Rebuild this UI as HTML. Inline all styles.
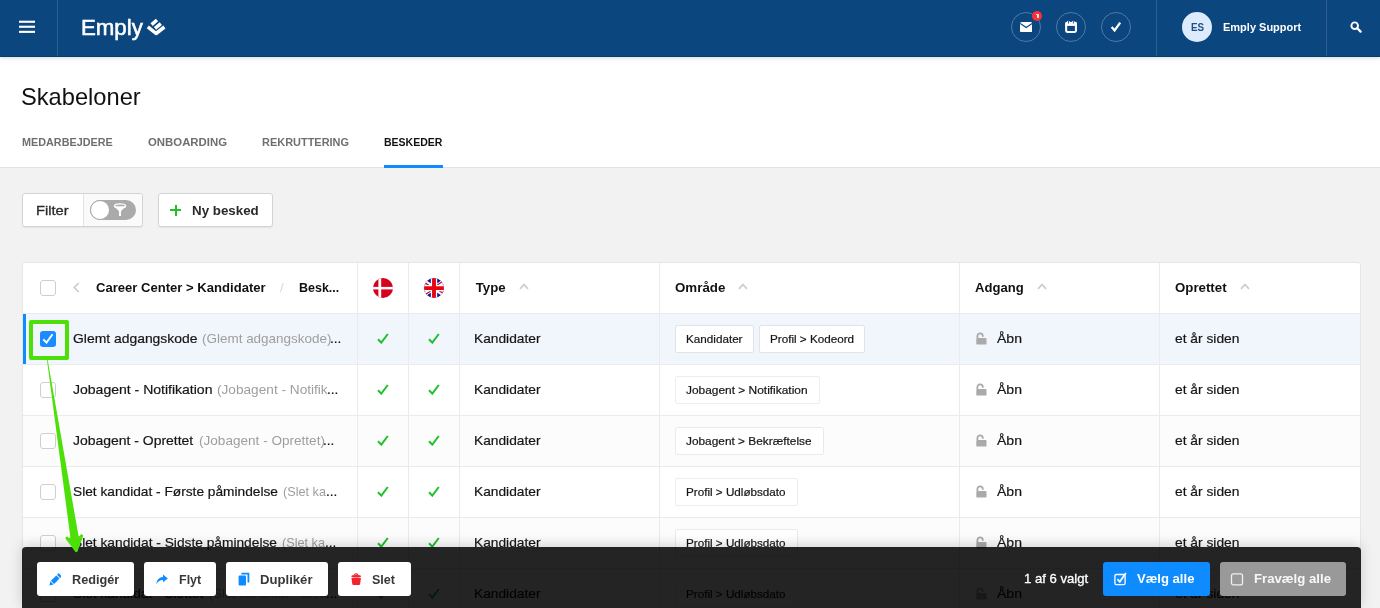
<!DOCTYPE html>
<html lang="da">
<head>
<meta charset="utf-8">
<title>Skabeloner</title>
<style>
*{box-sizing:border-box;margin:0;padding:0}
html,body{width:1380px;height:608px;overflow:hidden;background:#f2f2f2;font-family:"Liberation Sans",sans-serif;color:#111}
.abs,.t{position:absolute}
.t{white-space:nowrap;line-height:1;transform-origin:0 50%}
.b{font-weight:bold}
.w{color:#fff}
#hdr{position:absolute;left:0;top:0;width:1380px;height:57px;background:#0b467f;border-bottom:1px solid #043b78;box-shadow:0 1px 4px rgba(0,0,0,.16);z-index:5}
.vdiv{position:absolute;top:0;width:1px;height:56px;background:rgba(255,255,255,.14)}
.circ{position:absolute;top:12px;width:30px;height:30px;border-radius:50%;border:1px solid rgba(255,255,255,.28)}
#sub{position:absolute;left:0;top:56px;width:1380px;height:112px;background:#fff;border-bottom:1px solid #e2e2e2}
.tab{font-weight:bold;color:#6f6f6f}
.btn{position:absolute;background:#fff;border:1px solid #d4d4d4;border-radius:3px;box-shadow:0 1px 1px rgba(0,0,0,.06)}
#tbl{position:absolute;left:22px;top:262px;width:1339px;height:360px;background:#fff;border:1px solid #e6e6e6;border-radius:3px 3px 0 0}
.row{position:absolute;left:23px;width:1337px;height:51px;border-top:1px solid #ebebeb}
.alt{background:#fcfcfc}
.sel{background:#f1f5fc}
.cdiv{position:absolute;top:263px;width:1px;height:345px;background:#ebebeb}
.cb{position:absolute;left:40px;width:16px;height:16px;border:1px solid #cfcfcf;border-radius:3px;background:#fff}
.c{color:#151515;-webkit-text-stroke:0.2px #151515}
.g{color:#9e9e9e}
.tag{position:absolute;height:26.5px;box-shadow:0 0 0 1px rgba(0,0,0,.07);border-radius:1.5px;background:#fff}
.h{font-weight:bold;color:#111}
#bar{position:absolute;left:22px;top:547px;width:1339px;height:61px;background:rgba(0,0,0,.86);border-radius:4px 4px 0 0;z-index:3;box-shadow:0 -2px 13px rgba(0,0,0,.17)}
.bb{position:absolute;top:562px;height:34px;background:#fff;border-radius:3px;z-index:4}
.z5{z-index:5}
.bt{font-weight:bold;color:#383838;z-index:5}
#root{position:absolute;left:0;top:0;width:1380px;height:608px;overflow:hidden;will-change:transform}
</style>
</head>
<body>
<div id="root">
<div id="hdr">
<svg class="abs" style="left:19px;top:20px" width="16" height="14" viewBox="0 0 16 14"><rect x="0" y="0.7" width="16" height="2.1" fill="#fff"/><rect x="0" y="5.7" width="16" height="2.1" fill="#fff"/><rect x="0" y="10.8" width="16" height="2.1" fill="#fff"/></svg>
<div class="vdiv" style="left:57px"></div>
<span class="t" id="t1" style="left:80.99px;top:17.31px;font-size:22px;transform:scaleX(1.0113);color:#fff;-webkit-text-stroke:0.55px #fff;">Emply</span>
<svg class="abs" style="left:140px;top:10px" width="35" height="35" viewBox="140 10 35 35"><g fill="none" stroke="#fff" stroke-width="3.5" stroke-linejoin="round"><path d="M151.6 24.6 L157.0 20.0"/><path d="M155.0 28.3 L160.8 23.6"/><path d="M147.8 26.9 L156.1 33.5 L164.4 27.0" stroke-linecap="butt"/></g></svg>
<div class="circ" style="left:1011px"></div>
<div class="circ" style="left:1056px"></div>
<div class="circ" style="left:1101px"></div>
<svg class="abs" style="left:1019.8px;top:21.8px" width="12.4" height="10.4" viewBox="0 0 12.4 10.4"><rect x="0" y="0" width="12.4" height="10.4" rx="1.7" fill="#fff"/><path d="M0.3 1.5 L6.2 5.6 L12.1 1.5" fill="none" stroke="#0b467f" stroke-width="1.15"/></svg>
<div class="abs" style="left:1032px;top:11px;width:10px;height:10px;border-radius:50%;background:#fb2f3a"></div>
<div class="abs" style="left:1037.2px;top:13.6px;width:1.5px;height:4.8px;background:#ffd9d9"></div>
<div class="abs" style="left:1036.2px;top:14.1px;width:1.4px;height:1.2px;background:#ffd9d9"></div>
<svg class="abs" style="left:1064px;top:20px" width="14" height="14" viewBox="0 0 14 14"><rect x="2.15" y="2.95" width="9.8" height="9" rx="1.1" fill="none" stroke="#fff" stroke-width="2.1"/><rect x="1.6" y="1.9" width="10.9" height="4" fill="#fff"/><rect x="3.2" y="0.7" width="2.4" height="2.6" rx="0.9" fill="#fff"/><rect x="8.1" y="0.7" width="2.4" height="2.6" rx="0.9" fill="#fff"/><rect x="4" y="0" width="0.85" height="3.5" fill="#0b467f"/><rect x="8.9" y="0" width="0.85" height="3.5" fill="#0b467f"/></svg>
<svg class="abs" style="left:1109px;top:20px" width="14" height="14" viewBox="0 0 14 14"><path d="M2.7 6.9 L5.6 10.4 L11.2 2.6" fill="none" stroke="#fff" stroke-width="2.3"/></svg>
<div class="vdiv" style="left:1156px"></div>
<div class="abs" style="left:1182px;top:12px;width:30px;height:30px;border-radius:50%;background:#dcecfd"></div>
<span class="t b" id="t2" style="left:1190.50px;top:22.32px;font-size:11.3px;transform:scaleX(0.8690);color:#1e4f86;">ES</span>
<span class="t b w" id="t3" style="left:1222.80px;top:22.11px;font-size:11.4px;transform:scaleX(0.9654);">Emply Support</span>
<div class="vdiv" style="left:1326px"></div>
<svg class="abs" style="left:1350px;top:21px" width="13" height="13" viewBox="0 0 13 13"><circle cx="4.7" cy="4.7" r="3.3" fill="none" stroke="#fff" stroke-width="1.9"/><path d="M7.3 7.3 L10.6 10.6" stroke="#fff" stroke-width="2.3" stroke-linecap="round"/></svg>
</div>
<div id="sub"></div>
<span class="t" id="t4" style="left:20.98px;top:86.30px;font-size:23.2px;transform:scaleX(1.0207);color:#111;">Skabeloner</span>
<span class="t tab" id="t5" style="left:22.00px;top:136.01px;font-size:11.6px;transform:scaleX(0.9329);">MEDARBEJDERE</span>
<span class="t tab" id="t6" style="left:148.00px;top:136.01px;font-size:11.6px;transform:scaleX(0.9815);">ONBOARDING</span>
<span class="t tab" id="t7" style="left:262.00px;top:136.01px;font-size:11.6px;transform:scaleX(0.9448);">REKRUTTERING</span>
<span class="t tab" id="t8" style="left:384.00px;top:136.01px;font-size:11.6px;transform:scaleX(0.9070);color:#111;">BESKEDER</span>
<div class="abs" style="left:384px;top:165px;width:59px;height:3px;background:#0d8bff"></div>
<div class="btn" style="left:22px;top:193px;width:121px;height:34px"></div>
<div class="abs" style="left:83px;top:194px;width:59px;height:32px;background:#fafafa;border-left:1px solid #e2e2e2;border-radius:0 3px 3px 0"></div>
<div class="abs" style="left:90px;top:200px;width:46px;height:20px;border-radius:10px;background:#aaa"></div>
<div class="abs" style="left:90px;top:200px;width:20px;height:20px;border-radius:50%;background:#fff;border:0.7px solid #a6a6a6"></div>
<svg class="abs" style="left:113px;top:203.3px" width="14" height="14" viewBox="0 0 14 14"><ellipse cx="7" cy="2.9" rx="5.6" ry="2" fill="none" stroke="#fff" stroke-width="1.3"/><path d="M1.4 3.3 L6 8.2 V13 H8 V8.2 L12.6 3.3 Z" fill="#fff"/></svg>
<span class="t" id="t9" style="left:35.92px;top:204.01px;font-size:13.5px;transform:scaleX(1.0846);color:#2a2a2a;-webkit-text-stroke:0.3px #2a2a2a;">Filter</span>
<div class="btn" style="left:158px;top:193px;width:115px;height:34px"></div>
<div class="abs" style="left:170px;top:209px;width:11px;height:2px;background:#22c02e"></div>
<div class="abs" style="left:174.5px;top:204.5px;width:2px;height:11px;background:#22c02e"></div>
<span class="t b" id="t10" style="left:191.50px;top:204.01px;font-size:13.5px;transform:scaleX(0.9883);color:#2a2a2a;">Ny besked</span>
<div id="tbl"></div>
<div class="row sel" style="top:313px"></div>
<div class="abs" style="left:23px;top:314px;width:3px;height:50px;background:#0d8bff"></div>
<div class="abs" style="left:40px;top:331px;width:16px;height:16px;border-radius:3px;background:#1a8cff"></div>
<svg class="abs" style="left:42px;top:333px" width="12" height="11" viewBox="0 0 12 11"><path d="M1.3 6.4 L4.5 9.6 L10.5 1.2" fill="none" stroke="#fff" stroke-width="1.9"/></svg>
<span class="t c" id="t11" style="left:73.00px;top:332.11px;font-size:13.4px;transform:scaleX(1.0385);">Glemt adgangskode</span>
<span class="t g" id="t12" style="left:202.00px;top:332.11px;font-size:13.4px;transform:scaleX(1.0054);">(Glemt adgangskode)</span>
<span class="t c" id="t13" style="left:330.38px;top:332.11px;font-size:13.4px;transform:scaleX(1.0169);">...</span>
<svg class="abs" style="left:377px;top:333px" width="12" height="11" viewBox="0 0 12 11"><path d="M1 6.2 L4.3 9.6 L10.8 1" fill="none" stroke="#1fc02b" stroke-width="2"/></svg>
<svg class="abs" style="left:428px;top:333px" width="12" height="11" viewBox="0 0 12 11"><path d="M1 6.2 L4.3 9.6 L10.8 1" fill="none" stroke="#1fc02b" stroke-width="2"/></svg>
<span class="t c" id="t14" style="left:473.97px;top:332.11px;font-size:13.4px;transform:scaleX(1.0263);">Kandidater</span>
<div class="tag" style="left:675.7px;top:325.7px;width:77.6px"></div>
<span class="t c" id="t15" style="left:686.40px;top:334.00px;font-size:11.2px;transform:scaleX(1.0444);">Kandidater</span>
<div class="tag" style="left:759.7px;top:325.7px;width:104.6px"></div>
<span class="t c" id="t16" style="left:770.40px;top:334.00px;font-size:11.2px;transform:scaleX(1.0434);">Profil &gt; Kodeord</span>
<svg class="abs" style="left:975.6px;top:331.9px" width="11" height="13" viewBox="0 0 11 13"><path d="M1.4 6 V4 A2.7 2.7 0 0 1 6.8 4 V4.7" fill="none" stroke="#aaa" stroke-width="1.8"/><rect x="0.3" y="6" width="10.2" height="6.6" rx="0.9" fill="#aaa"/></svg>
<span class="t c" id="t17" style="left:997.00px;top:332.11px;font-size:13.4px;transform:scaleX(1.0480);">&Aring;bn</span>
<span class="t c" id="t18" style="left:1175.00px;top:332.11px;font-size:13.4px;transform:scaleX(1.0309);">et &aring;r siden</span>
<div class="row" style="top:364px"></div>
<div class="cb" style="top:382px"></div>
<span class="t c" id="t19" style="left:73.00px;top:383.11px;font-size:13.4px;transform:scaleX(1.0467);">Jobagent - Notifikation</span>
<span class="t g" id="t20" style="left:217.00px;top:383.11px;font-size:13.4px;transform:scaleX(1.0187);">(Jobagent - Notifik</span>
<span class="t c" id="t21" style="left:327.38px;top:383.11px;font-size:13.4px;transform:scaleX(1.0169);">...</span>
<svg class="abs" style="left:377px;top:384px" width="12" height="11" viewBox="0 0 12 11"><path d="M1 6.2 L4.3 9.6 L10.8 1" fill="none" stroke="#1fc02b" stroke-width="2"/></svg>
<svg class="abs" style="left:428px;top:384px" width="12" height="11" viewBox="0 0 12 11"><path d="M1 6.2 L4.3 9.6 L10.8 1" fill="none" stroke="#1fc02b" stroke-width="2"/></svg>
<span class="t c" id="t22" style="left:473.97px;top:383.11px;font-size:13.4px;transform:scaleX(1.0263);">Kandidater</span>
<div class="tag" style="left:675.7px;top:376.7px;width:143.6px"></div>
<span class="t c" id="t23" style="left:686.40px;top:385.00px;font-size:11.2px;transform:scaleX(1.0649);">Jobagent &gt; Notifikation</span>
<svg class="abs" style="left:975.6px;top:382.9px" width="11" height="13" viewBox="0 0 11 13"><path d="M1.4 6 V4 A2.7 2.7 0 0 1 6.8 4 V4.7" fill="none" stroke="#aaa" stroke-width="1.8"/><rect x="0.3" y="6" width="10.2" height="6.6" rx="0.9" fill="#aaa"/></svg>
<span class="t c" id="t24" style="left:997.00px;top:383.11px;font-size:13.4px;transform:scaleX(1.0480);">&Aring;bn</span>
<span class="t c" id="t25" style="left:1175.00px;top:383.11px;font-size:13.4px;transform:scaleX(1.0309);">et &aring;r siden</span>
<div class="row alt" style="top:415px"></div>
<div class="cb" style="top:433px"></div>
<span class="t c" id="t26" style="left:73.00px;top:434.11px;font-size:13.4px;transform:scaleX(1.0419);">Jobagent - Oprettet</span>
<span class="t g" id="t27" style="left:198.50px;top:434.11px;font-size:13.4px;transform:scaleX(1.0134);">(Jobagent - Oprettet)</span>
<span class="t c" id="t28" style="left:323.38px;top:434.11px;font-size:13.4px;transform:scaleX(1.0169);">...</span>
<svg class="abs" style="left:377px;top:435px" width="12" height="11" viewBox="0 0 12 11"><path d="M1 6.2 L4.3 9.6 L10.8 1" fill="none" stroke="#1fc02b" stroke-width="2"/></svg>
<svg class="abs" style="left:428px;top:435px" width="12" height="11" viewBox="0 0 12 11"><path d="M1 6.2 L4.3 9.6 L10.8 1" fill="none" stroke="#1fc02b" stroke-width="2"/></svg>
<span class="t c" id="t29" style="left:473.97px;top:434.11px;font-size:13.4px;transform:scaleX(1.0263);">Kandidater</span>
<div class="tag" style="left:675.7px;top:427.7px;width:147.6px"></div>
<span class="t c" id="t30" style="left:686.40px;top:436.00px;font-size:11.2px;transform:scaleX(1.0596);">Jobagent &gt; Bekr&aelig;ftelse</span>
<svg class="abs" style="left:975.6px;top:433.9px" width="11" height="13" viewBox="0 0 11 13"><path d="M1.4 6 V4 A2.7 2.7 0 0 1 6.8 4 V4.7" fill="none" stroke="#aaa" stroke-width="1.8"/><rect x="0.3" y="6" width="10.2" height="6.6" rx="0.9" fill="#aaa"/></svg>
<span class="t c" id="t31" style="left:997.00px;top:434.11px;font-size:13.4px;transform:scaleX(1.0480);">&Aring;bn</span>
<span class="t c" id="t32" style="left:1175.00px;top:434.11px;font-size:13.4px;transform:scaleX(1.0309);">et &aring;r siden</span>
<div class="row" style="top:466px"></div>
<div class="cb" style="top:484px"></div>
<span class="t c" id="t33" style="left:73.00px;top:485.11px;font-size:13.4px;transform:scaleX(1.0237);">Slet kandidat - F&oslash;rste p&aring;mindelse</span>
<span class="t g" id="t34" style="left:283.00px;top:485.11px;font-size:13.4px;transform:scaleX(0.9467);">(Slet ka</span>
<span class="t c" id="t35" style="left:325.88px;top:485.11px;font-size:13.4px;transform:scaleX(1.0169);">...</span>
<svg class="abs" style="left:377px;top:486px" width="12" height="11" viewBox="0 0 12 11"><path d="M1 6.2 L4.3 9.6 L10.8 1" fill="none" stroke="#1fc02b" stroke-width="2"/></svg>
<svg class="abs" style="left:428px;top:486px" width="12" height="11" viewBox="0 0 12 11"><path d="M1 6.2 L4.3 9.6 L10.8 1" fill="none" stroke="#1fc02b" stroke-width="2"/></svg>
<span class="t c" id="t36" style="left:473.97px;top:485.11px;font-size:13.4px;transform:scaleX(1.0263);">Kandidater</span>
<div class="tag" style="left:675.7px;top:478.7px;width:121.6px"></div>
<span class="t c" id="t37" style="left:686.40px;top:487.00px;font-size:11.2px;transform:scaleX(1.0428);">Profil &gt; Udl&oslash;bsdato</span>
<svg class="abs" style="left:975.6px;top:484.9px" width="11" height="13" viewBox="0 0 11 13"><path d="M1.4 6 V4 A2.7 2.7 0 0 1 6.8 4 V4.7" fill="none" stroke="#aaa" stroke-width="1.8"/><rect x="0.3" y="6" width="10.2" height="6.6" rx="0.9" fill="#aaa"/></svg>
<span class="t c" id="t38" style="left:997.00px;top:485.11px;font-size:13.4px;transform:scaleX(1.0480);">&Aring;bn</span>
<span class="t c" id="t39" style="left:1175.00px;top:485.11px;font-size:13.4px;transform:scaleX(1.0309);">et &aring;r siden</span>
<div class="row alt" style="top:517px"></div>
<div class="cb" style="top:535px"></div>
<span class="t c" id="t40" style="left:73.00px;top:536.11px;font-size:13.4px;transform:scaleX(1.0263);">Slet kandidat - Sidste p&aring;mindelse</span>
<span class="t g" id="t41" style="left:282.00px;top:536.11px;font-size:13.4px;transform:scaleX(0.9467);">(Slet ka</span>
<span class="t c" id="t42" style="left:324.88px;top:536.11px;font-size:13.4px;transform:scaleX(1.0169);">...</span>
<svg class="abs" style="left:377px;top:537px" width="12" height="11" viewBox="0 0 12 11"><path d="M1 6.2 L4.3 9.6 L10.8 1" fill="none" stroke="#1fc02b" stroke-width="2"/></svg>
<svg class="abs" style="left:428px;top:537px" width="12" height="11" viewBox="0 0 12 11"><path d="M1 6.2 L4.3 9.6 L10.8 1" fill="none" stroke="#1fc02b" stroke-width="2"/></svg>
<span class="t c" id="t43" style="left:473.97px;top:536.11px;font-size:13.4px;transform:scaleX(1.0263);">Kandidater</span>
<div class="tag" style="left:675.7px;top:529.7px;width:121.6px"></div>
<span class="t c" id="t44" style="left:686.40px;top:538.00px;font-size:11.2px;transform:scaleX(1.0428);">Profil &gt; Udl&oslash;bsdato</span>
<svg class="abs" style="left:975.6px;top:535.9px" width="11" height="13" viewBox="0 0 11 13"><path d="M1.4 6 V4 A2.7 2.7 0 0 1 6.8 4 V4.7" fill="none" stroke="#aaa" stroke-width="1.8"/><rect x="0.3" y="6" width="10.2" height="6.6" rx="0.9" fill="#aaa"/></svg>
<span class="t c" id="t45" style="left:997.00px;top:536.11px;font-size:13.4px;transform:scaleX(1.0480);">&Aring;bn</span>
<span class="t c" id="t46" style="left:1175.00px;top:536.11px;font-size:13.4px;transform:scaleX(1.0309);">et &aring;r siden</span>
<div class="row" style="top:568px"></div>
<div class="cb" style="top:586px"></div>
<span class="t c" id="t47" style="left:73.00px;top:587.11px;font-size:13.4px;transform:scaleX(1.0230);">Slet kandidat - Slettet</span>
<span class="t g" id="t48" style="left:209.00px;top:587.11px;font-size:13.4px;transform:scaleX(0.9764);">(Slet kandidat - Slett</span>
<span class="t c" id="t49" style="left:326.38px;top:587.11px;font-size:13.4px;transform:scaleX(1.0169);">...</span>
<svg class="abs" style="left:377px;top:588px" width="12" height="11" viewBox="0 0 12 11"><path d="M1 6.2 L4.3 9.6 L10.8 1" fill="none" stroke="#1fc02b" stroke-width="2"/></svg>
<svg class="abs" style="left:428px;top:588px" width="12" height="11" viewBox="0 0 12 11"><path d="M1 6.2 L4.3 9.6 L10.8 1" fill="none" stroke="#1fc02b" stroke-width="2"/></svg>
<span class="t c" id="t50" style="left:473.97px;top:587.11px;font-size:13.4px;transform:scaleX(1.0263);">Kandidater</span>
<div class="tag" style="left:675.7px;top:580.7px;width:121.6px"></div>
<span class="t c" id="t51" style="left:686.40px;top:589.00px;font-size:11.2px;transform:scaleX(1.0428);">Profil &gt; Udl&oslash;bsdato</span>
<svg class="abs" style="left:975.6px;top:586.9px" width="11" height="13" viewBox="0 0 11 13"><path d="M1.4 6 V4 A2.7 2.7 0 0 1 6.8 4 V4.7" fill="none" stroke="#aaa" stroke-width="1.8"/><rect x="0.3" y="6" width="10.2" height="6.6" rx="0.9" fill="#aaa"/></svg>
<span class="t c" id="t52" style="left:997.00px;top:587.11px;font-size:13.4px;transform:scaleX(1.0480);">&Aring;bn</span>
<span class="t c" id="t53" style="left:1175.00px;top:587.11px;font-size:13.4px;transform:scaleX(1.0309);">et &aring;r siden</span>
<div class="cb" style="top:280px"></div>
<svg class="abs" style="left:73px;top:282px" width="7" height="11" viewBox="0 0 7 11"><path d="M5.8 1 L1.3 5.5 L5.8 10" fill="none" stroke="#cbcbcb" stroke-width="1.7"/></svg>
<span class="t h" id="t54" style="left:95.90px;top:281.00px;font-size:13.2px;transform:scaleX(0.9912);">Career Center &gt; Kandidater</span>
<span class="t" id="t55" style="left:280.20px;top:281.20px;font-size:13.6px;transform:scaleX(0.9500);color:#d8d8d8;">/</span>
<span class="t h" id="t56" style="left:298.80px;top:281.00px;font-size:13.2px;transform:scaleX(0.9461);">Besk...</span>
<svg class="abs" style="left:373px;top:277.9px" width="20" height="20" viewBox="0 0 20 20"><defs><clipPath id="cc"><circle cx="10" cy="10" r="10"/></clipPath></defs><g clip-path="url(#cc)"><rect width="20" height="20" fill="#d6001f"/><rect x="5.4" y="0" width="2.8" height="20" fill="#fff"/><rect x="0" y="8.9" width="20" height="2.5" fill="#fff"/></g></svg>
<svg class="abs" style="left:424px;top:277.9px" width="20" height="20" viewBox="0 0 20 20"><g clip-path="url(#cc)"><rect width="20" height="20" fill="#0f1590"/><path d="M-5 0 L25 20 M25 0 L-5 20" stroke="#fff" stroke-width="4.2"/><path d="M-5 0.8 L10 10.8 M25 19.2 L10 9.2 M25 -0.8 L10 9.2 M-5 20.8 L10 10.8" stroke="#e0001a" stroke-width="1.3"/><path d="M10 0 V20 M0 10.1 H20" stroke="#fff" stroke-width="6.4"/><path d="M10 0 V20 M0 10.1 H20" stroke="#e30613" stroke-width="3.9"/></g></svg>
<span class="t h" id="t57" style="left:475.80px;top:281.00px;font-size:13.2px;">Type</span>
<svg class="abs" style="left:518.6px;top:283px" width="10" height="7" viewBox="0 0 10 7"><path d="M1 5.8 L5 1.6 L9 5.8" fill="none" stroke="#cecece" stroke-width="1.7"/></svg>
<span class="t h" id="t58" style="left:675.40px;top:281.00px;font-size:13.2px;transform:scaleX(1.0100);">Omr&aring;de</span>
<svg class="abs" style="left:738.3px;top:283px" width="10" height="7" viewBox="0 0 10 7"><path d="M1 5.8 L5 1.6 L9 5.8" fill="none" stroke="#cecece" stroke-width="1.7"/></svg>
<span class="t h" id="t59" style="left:975.40px;top:281.00px;font-size:13.2px;transform:scaleX(0.9913);">Adgang</span>
<svg class="abs" style="left:1037.2px;top:283px" width="10" height="7" viewBox="0 0 10 7"><path d="M1 5.8 L5 1.6 L9 5.8" fill="none" stroke="#cecece" stroke-width="1.7"/></svg>
<span class="t h" id="t60" style="left:1175.40px;top:281.00px;font-size:13.2px;transform:scaleX(1.0058);">Oprettet</span>
<svg class="abs" style="left:1240.2px;top:283px" width="10" height="7" viewBox="0 0 10 7"><path d="M1 5.8 L5 1.6 L9 5.8" fill="none" stroke="#cecece" stroke-width="1.7"/></svg>
<div class="cdiv" style="left:357px"></div>
<div class="cdiv" style="left:408px"></div>
<div class="cdiv" style="left:459px"></div>
<div class="cdiv" style="left:659px"></div>
<div class="cdiv" style="left:959px"></div>
<div class="cdiv" style="left:1159px"></div>
<div class="abs" style="left:29px;top:320px;width:40px;height:40px;border:4px solid #4de008;border-radius:2px"></div>
<div id="bar"></div>
<div class="bb" style="left:37px;width:97px"></div>
<div class="bb" style="left:144px;width:72px"></div>
<div class="bb" style="left:226px;width:102px"></div>
<div class="bb" style="left:338px;width:73px"></div>
<span class="t bt" id="t61" style="left:71.60px;top:573.72px;font-size:12.6px;transform:scaleX(1.0088);">Redig&eacute;r</span>
<span class="t bt" id="t62" style="left:178.60px;top:573.72px;font-size:12.6px;transform:scaleX(0.9916);">Flyt</span>
<span class="t bt" id="t63" style="left:260.20px;top:573.72px;font-size:12.6px;transform:scaleX(1.0419);">Duplik&eacute;r</span>
<span class="t bt" id="t64" style="left:372.20px;top:573.72px;font-size:12.6px;transform:scaleX(0.9957);">Slet</span>
<span class="t z5" id="t65" style="left:1023.60px;top:573.01px;font-size:12.6px;transform:scaleX(1.0401);color:#fff;-webkit-text-stroke:0.3px #fff;">1 af 6 valgt</span>
<div class="bb" style="left:1103px;width:107px;background:#0d8bff"></div>
<div class="bb" style="left:1220px;width:126px;background:#999"></div>
<span class="t b z5" id="t66" style="left:1137.40px;top:573.42px;font-size:12.6px;transform:scaleX(1.0382);color:#fff;">V&aelig;lg alle</span>
<span class="t b z5" id="t67" style="left:1254.00px;top:573.42px;font-size:12.6px;transform:scaleX(1.0477);color:#f8f8f8;">Frav&aelig;lg alle</span>
<svg class="abs" style="left:0;top:0;z-index:6" width="120" height="608" viewBox="0 0 120 608"><path d="M46.9 359.5 L47.6 359.5 L79.1 539.2 L70.8 540.6 Z" fill="#4de008"/><path d="M67.0 538.2 L76.3 550.6 L81.6 535.8" fill="#4de008" stroke="#4de008" stroke-width="3" stroke-linejoin="round" stroke-linecap="round"/></svg>
<svg class="abs z5" style="left:48px;top:572.6px" width="13.4" height="14.4" viewBox="0 0 13 14"><g transform="rotate(45 6.5 7)" fill="#0d8bff"><rect x="4.3" y="-0.6" width="4.4" height="2.3" rx="0.7"/><rect x="4.3" y="2.6" width="4.4" height="7.4"/><path d="M4.3 10.8 H8.7 L6.5 14.2 Z"/></g></svg>
<svg class="abs z5" style="left:156px;top:574px" width="13" height="11" viewBox="0 0 13 11"><path d="M7 0.6 L11.8 4.4 L7 8.2 V5.9 C4.2 5.9 2 7.2 0.3 10 C0.9 5.6 3.2 3.2 7 2.9 Z" fill="#0d8bff"/></svg>
<svg class="abs z5" style="left:238px;top:572px" width="12" height="14" viewBox="0 0 12 14"><rect x="0.6" y="3.4" width="7.4" height="10" rx="1" fill="#0d8bff"/><path d="M3.4 1.6 H10.4 V10.6" fill="none" stroke="#0d8bff" stroke-width="1.8"/></svg>
<svg class="abs z5" style="left:350px;top:573px" width="12.4" height="12.6" viewBox="0 0 14 14"><path d="M1.6 5.6 H12.4 L11.4 12.4 A1.2 1.2 0 0 1 10.2 13.4 H3.8 A1.2 1.2 0 0 1 2.6 12.4 Z" fill="#f5222d"/><ellipse cx="7" cy="3.6" rx="5.6" ry="1.5" fill="#f5222d"/><path d="M5 2.4 C5 0.4 9 0.4 9 2.4" fill="none" stroke="#f5222d" stroke-width="1.2"/></svg>
<svg class="abs z5" style="left:1113px;top:571px" width="15" height="15" viewBox="0 0 15 15"><rect x="1.9" y="3.5" width="10.2" height="10.2" rx="1.4" fill="none" stroke="#fff" stroke-width="1.3"/><path d="M4.4 8.2 L6.8 10.8 L12.9 1.9" fill="none" stroke="#fff" stroke-width="1.8"/></svg>
<svg class="abs z5" style="left:1230px;top:572px" width="14" height="14" viewBox="0 0 14 14"><rect x="1.5" y="1.9" width="11" height="11" rx="1.9" fill="none" stroke="#f0f0f0" stroke-width="1.3"/></svg>
</div>
</body>
</html>
